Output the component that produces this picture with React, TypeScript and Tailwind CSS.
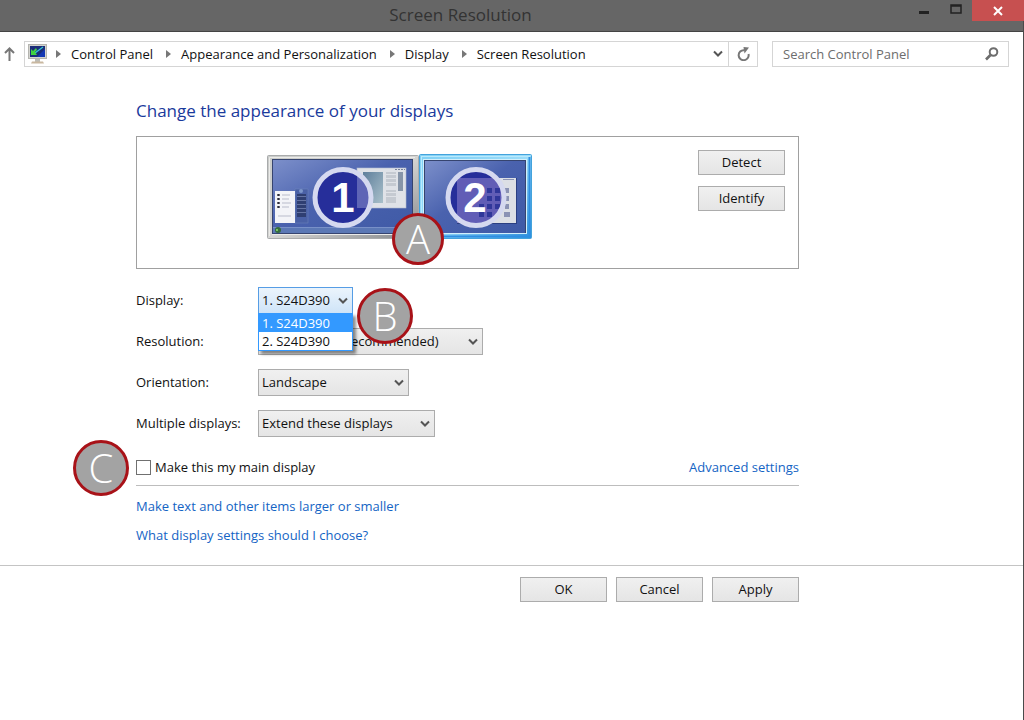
import React, { useState } from 'react';

interface SelectBoxProps {
  id: string;
  label: string;
  options: string[];
  className: string;
  open?: boolean;
  children?: React.ReactNode;
}

const ChevronIcon = () => (
  <svg width="10" height="8" viewBox="0 0 10 8" fill="none" stroke="#555" strokeWidth="2">
    <path d="M1 1.5 L5 5.5 L9 1.5" />
  </svg>
);

const CrumbArrow = () => (
  <svg width="5" height="8" viewBox="0 0 5 8" fill="#777" className="shrink-0">
    <path d="M0 0 L5 4 L0 8 Z" />
  </svg>
);

const DisplayIcon = () => (
  <svg width="19" height="20" viewBox="0 0 19 20" className="shrink-0">
    <rect x="0.5" y="0.5" width="18" height="14" fill="#d4d4cf" stroke="#b5b5b0" />
    <rect x="2" y="2" width="15" height="11" fill="#1438b4" />
    <path d="M2 2 H17 V5 L9 13 H2 Z" fill="#1a2c78" />
    <path d="M15 3 L7 9" stroke="#35c8d8" strokeWidth="1.2" />
    <path d="M3 5 L5 7 L8 4 L9 6 L7 8 L9 11 L3 11 Z" fill="#3fd23f" />
    <rect x="7" y="15" width="5" height="3" fill="#bcbcb6" />
    <path d="M4 17.5 H15 L16 19.5 H3 Z" fill="#c9b8a0" />
  </svg>
);

const Monitors = () => (
  <svg width="266" height="86" viewBox="0 0 266 86" role="img" aria-label="Displays 1 and 2">
    <defs>
      <linearGradient id="screen" x1="0" y1="0" x2="1" y2="1">
        <stop offset="0" stopColor="#7c8fca" />
        <stop offset="0.45" stopColor="#4a62ae" />
        <stop offset="1" stopColor="#3f5aa6" />
      </linearGradient>
      <linearGradient id="silver" x1="0" y1="0" x2="1" y2="1">
        <stop offset="0" stopColor="#c9cbc9" />
        <stop offset="0.5" stopColor="#d5d5d3" />
        <stop offset="1" stopColor="#85888b" />
      </linearGradient>
      <linearGradient id="selected" x1="0" y1="0" x2="1" y2="1">
        <stop offset="0" stopColor="#7fd0f5" />
        <stop offset="0.5" stopColor="#9adcf9" />
        <stop offset="1" stopColor="#2d8fdc" />
      </linearGradient>
      <linearGradient id="pane" x1="0" y1="0" x2="1" y2="1">
        <stop offset="0" stopColor="#5f7f9c" />
        <stop offset="1" stopColor="#a9c0ca" />
      </linearGradient>
    </defs>

    {/* display 1 */}
    <rect x="0.5" y="1.5" width="151" height="83" rx="1" fill="url(#silver)" stroke="#a9abac" />
    <path d="M2.5 82 V3.5 H148" fill="none" stroke="#ebebe9" />
    <rect x="5" y="5" width="141" height="75" fill="#36446f" />
    <rect x="6" y="6" width="139" height="73" fill="url(#screen)" />
    <rect x="6" y="73" width="139" height="6" fill="#5b78b5" />
    <rect x="6" y="73" width="139" height="1" fill="#7890c8" />
    <path d="M5 80.5 H146" stroke="#ebebe9" />
    <circle cx="11" cy="76" r="3" fill="#356c3c" />
    <circle cx="10" cy="76" r="1" fill="#8be06d" />
    <rect x="28" y="35" width="13" height="34" fill="#4a61a6" stroke="#7186bd" strokeWidth="0.5" />
    <rect x="30" y="40" width="9" height="23" fill="#2f3f72" />
    <path d="M30 42.5 H39 M30 46.5 H39 M30 50.5 H39 M30 54.5 H39 M30 58.5 H39" stroke="#7482b0" strokeWidth="0.8" />
    <circle cx="34" cy="37" r="2" fill="#7c96ca" />
    <rect x="8" y="37" width="20" height="32" fill="#f3f4f8" />
    <path d="M11.5 40 V56" stroke="#2b2b38" strokeWidth="2.4" strokeDasharray="2 2" />
    <path d="M15 41 H23 M15 45 H22 M15 49 H24 M15 53 H22 M11 62 H24" stroke="#b9bccb" />
    <rect x="90" y="14" width="49" height="40" fill="#dfe2e7" stroke="#b3bccf" strokeWidth="0.6" />
    <rect x="96" y="18" width="20" height="31" fill="url(#pane)" />
    <rect x="119" y="18" width="10" height="14" fill="#c5cad1" />
    <rect x="119" y="36" width="10" height="13" fill="#c5cad1" />
    <path d="M119 20.5 H129 M119 24.5 H129 M119 28.5 H129 M119 38.5 H129 M119 42.5 H129" stroke="#dfe2e7" />
    <rect x="131" y="18" width="5" height="19" fill="#8795a8" />
    <path d="M128 15.5 H138" stroke="#77829d" strokeDasharray="2 1" />
    <circle cx="76" cy="43.5" r="28" fill="#262e9a" />
    <path d="M90 19.5 A28 28 0 0 1 102 52 L100 54 H90 Z" fill="#7d82c5" opacity="0.65" />
    <circle cx="76" cy="43.5" r="28" fill="none" stroke="#d5d9f0" strokeWidth="5" />
    <text x="76" y="58" textAnchor="middle" fill="#fff" fontFamily="Liberation Sans, sans-serif" fontWeight="700" fontSize="42">1</text>

    {/* display 2, selected */}
    <rect x="152.5" y="0.5" width="112" height="84" rx="1" fill="url(#selected)" stroke="#44a3dc" />
    <rect x="154.5" y="2.5" width="108" height="80" fill="none" stroke="#b9e9fc" />
    <path d="M262.5 3 V82.5 H155" stroke="#2e8fe2" strokeWidth="2" fill="none" />
    <rect x="156" y="5" width="104" height="75" fill="#d2effb" />
    <rect x="157" y="6" width="102" height="73" fill="#36446f" />
    <rect x="158" y="7" width="100" height="72" fill="url(#screen)" />
    <rect x="190" y="24" width="60" height="46" fill="#2b3f82" />
    <rect x="190" y="24" width="59" height="45" fill="#dcdfe5" />
    <g fill="#8b93b4">
      <rect x="238" y="34" width="4" height="5" /><rect x="238" y="42" width="4" height="5" />
      <rect x="238" y="50" width="4" height="5" /><rect x="237" y="58" width="6" height="5" />
      <path d="M236 25 H247 V26 H236 Z" />
    </g>
    <circle cx="209" cy="43.5" r="28" fill="#262e9a" />
    <path d="M190 24 H228 A28 28 0 0 1 219 69 H190 Z" fill="#7069bd" opacity="0.8" />
    <g fill="#30379a">
      <rect x="220" y="34" width="5" height="5" /><rect x="228" y="34" width="5" height="5" />
      <rect x="220" y="42" width="5" height="5" /><rect x="228" y="42" width="5" height="5" />
      <rect x="212" y="50" width="5" height="5" /><rect x="220" y="50" width="5" height="5" />
      <rect x="228" y="50" width="5" height="5" /><rect x="212" y="58" width="5" height="5" />
      <rect x="220" y="58" width="5" height="5" />
    </g>
    <circle cx="209" cy="43.5" r="28" fill="none" stroke="#d5d9f0" strokeWidth="5" />
    <text x="208" y="58" textAnchor="middle" fill="#fff" fontFamily="Liberation Sans, sans-serif" fontWeight="700" fontSize="42">2</text>
  </svg>
);

const DialogButton = ({ children }: { children: React.ReactNode }) => (
  <button className="h-[25px] w-[87px] border border-[#acacac] bg-linear-to-b from-[#f0f0f0] to-[#e5e5e5] pb-px text-center leading-5">
    {children}
  </button>
);

const SelectBox = ({ id, label, options, className, open, children }: SelectBoxProps) => (
  <div className="flex items-center">
    <label htmlFor={id} className="w-[122px] shrink-0 pb-px">{label}</label>
    <div className={`relative ${className}`}>
      <select
        id={id}
        className={`block h-[27px] w-full appearance-none border pb-px pl-[3px] leading-5 ${
          open ? 'border-[#569de5] bg-linear-to-b from-[#ebf4fc] to-[#cfe4f8]' : 'border-[#acacac] bg-linear-to-b from-[#f0f0f0] to-[#e5e5e5]'
        }`}
      >
        {options.map(o => <option key={o}>{o}</option>)}
      </select>
      <div className="pointer-events-none absolute inset-y-0 right-[5px] flex items-center">
        <ChevronIcon />
      </div>
      {children}
    </div>
  </div>
);

const displays = ['1. S24D390', '2. S24D390'];

export default function App() {
  const [main, setMain] = useState(false);

  return (
    <div className="min-h-screen border-r border-[#4a4a4a] bg-white font-['Open_Sans','Noto_Sans',sans-serif] text-[13px] leading-5 text-[#111]">
      <header className="relative flex h-8 items-start border-b border-[#444] bg-[#666]">
        <h1 className="flex-1 pt-[3px] pr-[102px] text-center text-[17px] leading-6 text-[#333]">Screen Resolution</h1>
        <div className="absolute top-0 -right-px flex">
          <button aria-label="Minimize" className="flex h-[18px] w-8 items-center justify-center">
            <svg width="10" height="14" viewBox="0 0 10 14"><rect y="9" width="10" height="3" fill="#222" /></svg>
          </button>
          <button aria-label="Maximize" className="flex h-[18px] w-8 items-center justify-center">
            <svg width="12" height="10" viewBox="0 0 12 10"><path d="M1 1 H11 V9 H1 Z M1 2 H11" fill="none" stroke="#222" strokeWidth="1.5" /></svg>
          </button>
          <button aria-label="Close" className="flex h-[21px] w-[52px] items-center justify-center bg-[#c75050]">
            <svg width="10" height="10" viewBox="0 0 10 10"><path d="M1 1 L9 9 M9 1 L1 9" stroke="#fff" strokeWidth="2" /></svg>
          </button>
        </div>
      </header>

      <div className="flex items-center pt-[9px] pr-[14px]">
        <button aria-label="Up" className="flex w-6 shrink-0 items-center pl-1">
          <svg width="11" height="14" viewBox="0 0 11 14" fill="none" stroke="#777" strokeWidth="2">
            <path d="M5.5 14 V1.5 M1 6 L5.5 1.5 L10 6" />
          </svg>
        </button>
        <div className="flex h-[26px] min-w-0 flex-1 border border-[#d5d5d5]">
          <nav className="flex min-w-0 flex-1 items-center pb-px pl-[3px] whitespace-nowrap">
            <DisplayIcon />
            <span className="w-[9px]" />
            <CrumbArrow />
            <a href="#" className="pr-[13px] pl-[10px]">Control Panel</a>
            <CrumbArrow />
            <a href="#" className="pr-[13px] pl-[10px]">Appearance and Personalization</a>
            <CrumbArrow />
            <a href="#" className="pr-[13px] pl-[10px]">Display</a>
            <CrumbArrow />
            <a href="#" className="pl-[10px]">Screen Resolution</a>
          </nav>
          <button aria-label="Previous locations" className="flex w-[21px] items-center justify-center"><ChevronIcon /></button>
          <button aria-label="Refresh" className="flex w-[29px] items-center justify-center border-l border-[#d5d5d5]">
            <svg width="13" height="14" viewBox="0 0 13 14">
              <path d="M11.5 7 A5 5 0 1 1 7 3.2" fill="none" stroke="#777" strokeWidth="2" />
              <path d="M6.5 0 L12 0.5 L7.5 6.5 Z" fill="#777" />
            </svg>
          </button>
        </div>
        <div className="ml-[14px] flex h-[26px] w-[237px] items-center border border-[#d5d5d5] pr-[9px]">
          <input
            type="text"
            aria-label="Search Control Panel"
            placeholder="Search Control Panel"
            className="min-w-0 flex-1 pb-px pl-[10px] outline-none placeholder:text-[#6d6d6d]"
          />
          <svg width="14" height="14" viewBox="0 0 14 14" fill="none" stroke="#6d6d6d" strokeWidth="2">
            <circle cx="8.5" cy="5" r="3.8" />
            <path d="M5.5 8 L1 12.5" strokeWidth="2.6" />
          </svg>
        </div>
      </div>

      <main className="pr-4 pl-[136px]">
        <div className="max-w-[663px]">
          <h2 className="pt-8 text-[17px] leading-6 text-[#1a3a9c]">Change the appearance of your displays</h2>

          <section className="mt-[13px] flex h-[133px] items-start justify-between border border-[#a0a0a0] pt-[13px] pr-[13px]">
            <div className="relative mt-1 ml-[130px]">
              <Monitors />
              <span className="absolute top-[59px] left-[125px] flex size-[52px] items-center justify-center rounded-full border-3 border-[#a81218] bg-[#a3a3a3] text-[40px] font-light text-white">A</span>
            </div>
            <div className="flex flex-col gap-[11px]">
              <DialogButton>Detect</DialogButton>
              <DialogButton>Identify</DialogButton>
            </div>
          </section>

          <form className="mt-[18px] flex flex-col gap-[14px]">
            <SelectBox id="display" label="Display:" options={displays} className="z-10 w-[95px]" open>
              <ul className="absolute top-[26px] left-0 w-full border border-[#3399ff] bg-white shadow-[3px_3px_3px_rgba(0,0,0,0.45)]">
                {displays.map((d, i) => (
                  <li key={d} className={i === 0 ? 'bg-[#3399ff] pl-[3px] leading-[18px] text-white' : 'pl-[3px] leading-[18px]'}>{d}</li>
                ))}
              </ul>
              <span className="absolute top-px left-[99px] flex size-14 items-center justify-center rounded-full border-3 border-[#a81218] bg-[#a3a3a3] text-[40px] font-light text-white">B</span>
            </SelectBox>
            <SelectBox id="resolution" label="Resolution:" options={['1920 × 1080 (Recommended)']} className="w-[225px]" />
            <SelectBox id="orientation" label="Orientation:" options={['Landscape', 'Portrait']} className="w-[151px]" />
            <SelectBox id="multiple" label="Multiple displays:" options={['Extend these displays', 'Duplicate these displays']} className="w-[177px]" />
          </form>

          <div className="relative mt-5 flex h-[29px] items-start justify-between border-b border-[#bdbdbd]">
            <span className="absolute -top-[17px] -left-[63px] flex size-14 items-center justify-center rounded-full border-3 border-[#a81218] bg-[#a3a3a3] text-[40px] font-light text-white">C</span>
            <label className="flex items-center gap-1">
              <input
                type="checkbox"
                checked={main}
                onChange={e => setMain(e.target.checked)}
                className="size-[15px] appearance-none border border-[#707070] bg-white checked:bg-[#3399ff]"
              />
              Make this my main display
            </label>
            <a href="#" className="text-[#1464c4]">Advanced settings</a>
          </div>

          <div className="mt-[10px] flex flex-col items-start gap-[9px] text-[#1464c4]">
            <a href="#">Make text and other items larger or smaller</a>
            <a href="#">What display settings should I choose?</a>
          </div>
        </div>
      </main>

      <footer className="mt-5 border-t border-[#c4c4c4] pt-[11px] pr-4 pl-[136px]">
        <div className="flex max-w-[663px] justify-end gap-[9px]">
          <DialogButton>OK</DialogButton>
          <DialogButton>Cancel</DialogButton>
          <DialogButton>Apply</DialogButton>
        </div>
      </footer>
    </div>
  );
}
